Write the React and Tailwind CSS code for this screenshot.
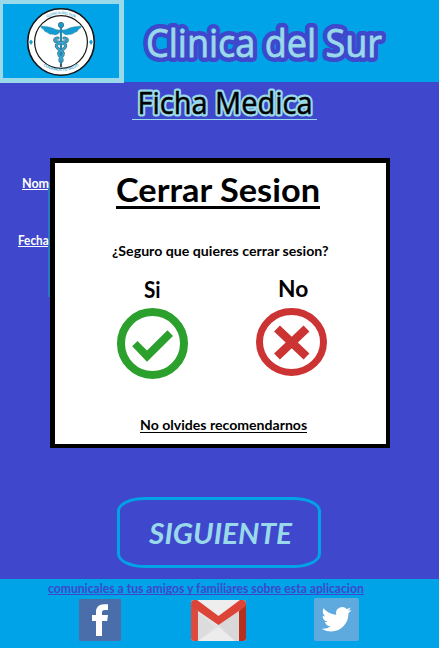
import { useLayoutEffect, useRef, useState } from "react";
import clsx from "clsx";

// One line of text, stretched horizontally to fill the given width.
function FitText({ width, className, children }) {
  const ref = useRef(null);
  const [scale, setScale] = useState(1);
  useLayoutEffect(() => {
    setScale(width / ref.current.offsetWidth);
  }, [width]);
  return (
    <div className={clsx("whitespace-nowrap", className)} style={{ width }}>
      <span ref={ref} className="inline-block origin-left" style={{ transform: `scaleX(${scale})` }}>
        {children}
      </span>
    </div>
  );
}

// Outlined lettering: a wide rounded halo beneath slightly emboldened text.
function Lettering({ id, width, height, x, baseline, length, size, fill, halo, haloWidth, weight, children }) {
  return (
    <svg width={width} height={height} className="block overflow-visible" strokeLinejoin="round">
      <use href={`#${id}`} stroke={halo} strokeWidth={haloWidth} fill={halo} />
      <g stroke={fill} strokeWidth={weight} fill={fill}>
        <text
          id={id}
          x={x}
          y={baseline}
          textLength={length}
          lengthAdjust="spacingAndGlyphs"
          fontFamily="'Open Sans', sans-serif"
          fontWeight="400"
          fontSize={size}
        >
          {children}
        </text>
      </g>
    </svg>
  );
}

function Caduceus() {
  return (
    <svg viewBox="0 0 70 70" className="h-[70px] w-[70px]">
      <circle cx="35" cy="35" r="33.3" fill="#fff" stroke="#151515" strokeWidth="1.600" />
      <circle cx="35" cy="35" r="26.4" fill="#fff" stroke="#151515" strokeWidth="1.200" />
      <path id="arcTop" d="M10.500 21A28.500 28.500 0 0 1 59.500 21" fill="none" />
      <path id="arcBottom" d="M9 50A31 31 0 0 0 61 50" fill="none" />
      <g fill="#35a9cf" fontSize="3.600" fontFamily="Lato, sans-serif" textAnchor="middle">
        <text><textPath href="#arcTop" startOffset="50%">CLINICA DEL SUR</textPath></text>
        <text><textPath href="#arcBottom" startOffset="50%">CUIDAMOS TU SALUD</textPath></text>
      </g>
      <path d="M5 32.500l2 2.500-2 3-2-3zM65 32.500l2 2.500-2 3-2-3z" fill="#1d9fd0" />
      <path d="M34 23C29 23.500 27 19 14 19C15 21.500 18 22 18 23.500C19 25 21 25 22 26C24 28 27 27 29 28C31 28 33 26.500 34 25zM36 23C41 23.500 43 19 56 19C55 21.500 52 22 52 23.500C51 25 49 25 48 26C46 28 43 27 41 28C39 28 37 26.500 36 25z" fill="#149bd0" stroke="#5d93a5" strokeWidth=".400" />
      <path d="M35 19V60" stroke="#47606b" strokeWidth="2.200" />
      <path d="M35 19V57" stroke="#149bd0" strokeWidth="1.400" />
      <circle cx="35" cy="18" r="2.700" fill="#149bd0" stroke="#47606b" strokeWidth=".700" />
      <g fill="none" strokeLinecap="round">
        <path d="M32 31C27 31 28 35 32 35C38 36 42 38 38.500 41C36 44 31 44 33 48C34 50 37 51 36 54M38 31C43 31 42 35 38 35C32 36 28 38 31.500 41C34 44 39 44 37 48C36 50 33 51 34 54" stroke="#47707f" strokeWidth="3" />
        <path d="M32 31C27 31 28 35 32 35C38 36 42 38 38.500 41C36 44 31 44 33 48C34 50 37 51 36 54M38 31C43 31 42 35 38 35C32 36 28 38 31.500 41C34 44 39 44 37 48C36 50 33 51 34 54" stroke="#2fa9d6" strokeWidth="1.700" />
      </g>
    </svg>
  );
}

function Accept() {
  return (
    <svg viewBox="0 0 71 71" className="h-[71px] w-[71px]">
      <circle cx="35.500" cy="35.500" r="31.500" fill="none" stroke="#2ca02c" strokeWidth="8" />
      <path d="M15.200 38.200L20.500 33L30 42.500L50.500 22.200L56 28L30 53.700Z" fill="#2ca02c" />
    </svg>
  );
}

function Reject() {
  return (
    <svg viewBox="0 0 71 68" className="h-[68px] w-[71px]">
      <ellipse cx="35.500" cy="34" rx="32" ry="30.500" fill="none" stroke="#cc3333" strokeWidth="7" />
      <path d="M21 20.500L50.500 48.500M50.500 20.500L21 48.500" stroke="#cc3333" strokeWidth="8.500" />
    </svg>
  );
}

function Facebook() {
  return (
    <svg viewBox="0 0 42 42" className="h-[42px] w-[42px]">
      <rect width="42" height="42" rx="1" fill="#4a6ea9" />
      <path d="M17 37V22H13V16H17V13C17 8 20 5.200 25 5.200H29V11H26C23.500 11 23 12 23 14V16H29L28.200 22H23V37Z" fill="#fff" />
    </svg>
  );
}

function Gmail() {
  return (
    <svg viewBox="0 0 55 41" className="h-[41px] w-[55px]">
      <rect x="0" y="0" width="55" height="41" rx="3" fill="#e2e2e2" />
      <path d="M6 0H49L27.500 18Z" fill="#eeeeee" />
      <path d="M7 41L27.500 27L44 41Z" fill="#ececec" />
      <path d="M7 13L24 27L7 41Z" fill="#dcdcdc" />
      <path d="M27.500 25L48 10V41H44Z" fill="#d8d8d8" />
      <path d="M0 4V38Q0 41 3 41H7V11Z" fill="#dd4b3e" />
      <path d="M55 4V38Q55 41 52 41H48V11Z" fill="#b5301f" />
      <path d="M0 3.500Q0 0 3.500 0H6L27.500 16L49 0H51.500Q55 0 55 3.500Q55 6 53 7.500L27.500 25L2 7.500Q0 6 0 3.500Z" fill="#dc4437" />
    </svg>
  );
}

function Twitter() {
  return (
    <svg viewBox="0 0 45 43" className="h-[43px] w-[45px]">
      <rect width="45" height="43" rx="2" fill="#5ea9dd" />
      <g transform="translate(7.500 6.300) scale(1.250)">
        <path d="M23.950 4.570a10 10 0 0 1-2.820.770 4.960 4.960 0 0 0 2.160-2.720 9.900 9.900 0 0 1-3.130 1.180 4.920 4.920 0 0 0-8.380 4.480C7.690 8.090 4.070 6.130 1.640 3.160a4.820 4.820 0 0 0-.660 2.470c0 1.710.870 3.210 2.190 4.100a4.900 4.900 0 0 1-2.230-.620v.060a4.920 4.920 0 0 0 3.950 4.830 5 5 0 0 1-2.210.080 4.940 4.940 0 0 0 4.600 3.420A9.870 9.870 0 0 1 0 19.540a13.990 13.990 0 0 0 7.550 2.210c9.050 0 14-7.500 14-13.980 0-.210 0-.420-.020-.630a9.940 9.940 0 0 0 2.460-2.550z" fill="#fff" />
      </g>
    </svg>
  );
}

function LogoutDialog() {
  return (
    <div className="absolute left-[50px] top-[158px] h-[290px] w-[340px] border-4 border-l-[5px] border-t-[5px] border-black bg-white text-black">
      <FitText width={204} className="ml-[61px] mt-[7px] h-[39px] border-b-[3px] border-black text-[32.5px] leading-[40px]">
        Cerrar Sesion
      </FitText>
      <FitText width={216} className="ml-[57px] mt-[32px] h-5 text-[13.5px] leading-5">
        ¿Seguro que quieres cerrar sesion?
      </FitText>
      <div className="mt-[13px] flex">
        <div className="ml-[62px] w-[71px]">
          <FitText width={17} className="ml-[27px] h-[34px] text-[22px] leading-[31px]">Si</FitText>
          <Accept />
        </div>
        <div className="ml-[68px] w-[71px]">
          <FitText width={30} className="ml-[22px] h-[34px] text-[22px] leading-[30px]">No</FitText>
          <Reject />
        </div>
      </div>
      <FitText width={167} className="ml-[85px] mt-[36px] h-[18px] border-b border-black text-[13.5px] leading-5">
        No olvides recomendarnos
      </FitText>
    </div>
  );
}

export default function App() {
  return (
    <div className="relative flex h-[648px] w-[439px] flex-col overflow-hidden bg-[#3f48cc] font-[Lato,sans-serif] font-bold">
      <header className="flex h-[82px] shrink-0 bg-[#00a2e8]">
        <div className="flex h-[83px] w-[124px] shrink-0 justify-center border-b-[5px] border-l-[3px] border-r-[5px] border-t-4 border-[#99d9ea] pt-[3px]">
          <Caduceus />
        </div>
        <Lettering
          id="clinic-name"
          width={315}
          height={82}
          x={22}
          baseline={57}
          length={236}
          size={37.5}
          fill="#99d9ea"
          halo="#3f48cc"
          haloWidth={10}
          weight={0.8}
        >
          Clinica del Sur
        </Lettering>
      </header>

      <main className="flex-1">
        <div className="ml-[132px] h-[38px] w-[185px] border-b border-[#99d9ea]">
          <Lettering
            id="page-title"
            width={185}
            height={37}
            x={5.5}
            baseline={32}
            length={175}
            size={30.5}
            fill="#000000"
            halo="#99d9ea"
            haloWidth={5}
            weight={0.5}
          >
            Ficha Medica
          </Lettering>
        </div>
        <div className="mt-[53px] flex h-[324px] text-white">
          <div className="w-12">
            <FitText width={27} className="ml-[22px] h-[17px] border-b border-white text-[12.5px] leading-[21px]">Nom</FitText>
            <FitText width={31} className="ml-[18px] mt-[40px] h-[17px] border-b border-white text-[12.5px] leading-[21px]">Fecha</FitText>
          </div>
          <div className="mt-[9px] h-[115px] w-[2px] bg-[#2878c0]" />
        </div>
        <button className="ml-[117px] block h-[71px] w-[204px] rounded-[28px/14px] border-[3px] border-[#00a2e8] text-left text-[#99d9ea]">
          <FitText width={143} className="ml-[29px] h-[60px] text-[29px] italic leading-[60px]">SIGUIENTE</FitText>
        </button>
      </main>

      <footer className="h-[69px] shrink-0 bg-[#00a2e8] text-[#3f48cc]">
        <FitText width={316} className="ml-[48px] h-[16px] border-b border-[#3f48cc] text-[12.5px] leading-[20px]">
          comunicales a tus amigos y familiares sobre esta aplicacion
        </FitText>
        <div className="ml-[79px] mt-[3px] flex items-end">
          <div className="mb-px"><Facebook /></div>
          <div className="mb-px ml-[70px]"><Gmail /></div>
          <div className="mb-px ml-[68px]"><Twitter /></div>
        </div>
      </footer>

      <LogoutDialog />
    </div>
  );
}
